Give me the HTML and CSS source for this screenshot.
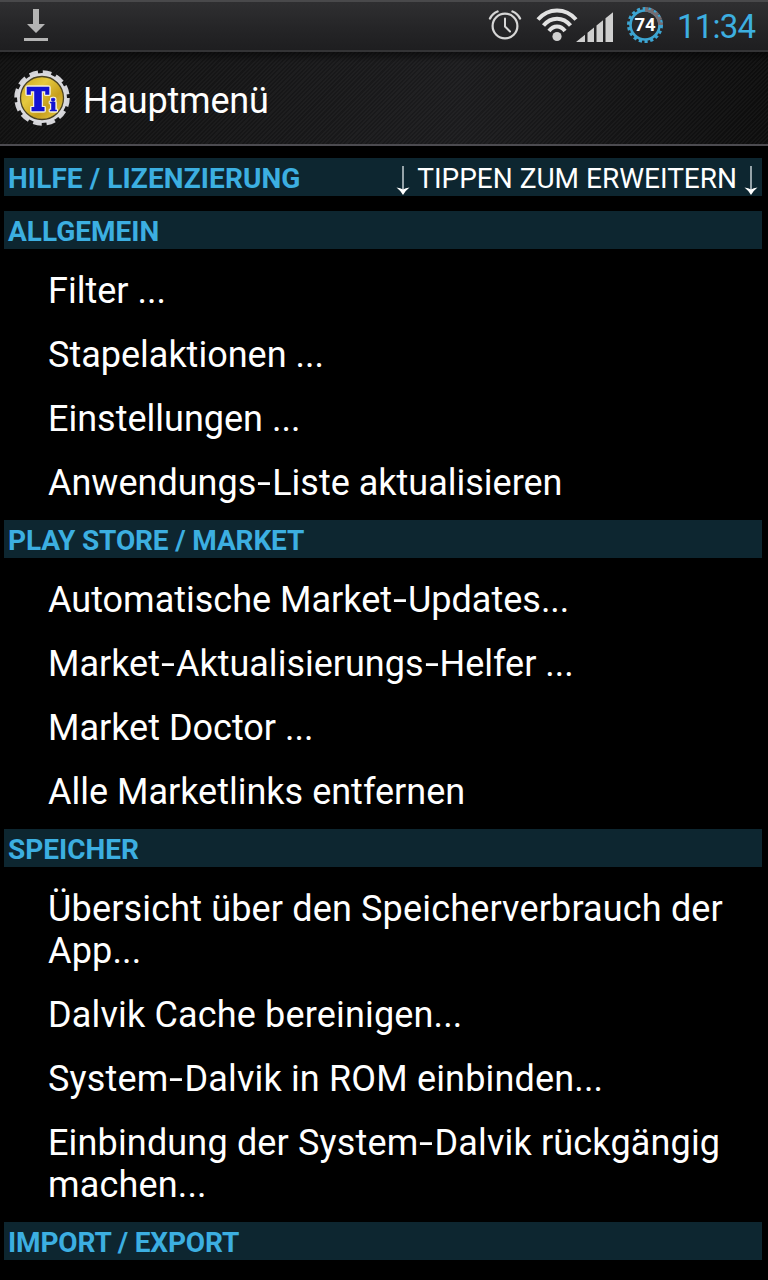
FILE: index.html
```html
<!DOCTYPE html>
<html lang="de">
<head>
    <meta charset="UTF-8">
    <meta name="viewport" content="width=device-width, initial-scale=1.0">
    <title>Hauptmenü</title>
    <link rel="stylesheet" href="styles.css">
</head>
<body>
    <div class="status-bar">
        <svg class="icon-download" width="24" height="34" viewBox="0 0 24 34">
            <path d="M9 1h6v15h6l-9 9-9-9h6z" fill="#b4b4b4"/>
            <path d="M0 30h24v3H0z" fill="#b4b4b4"/>
        </svg>
        <svg class="icon-alarm" width="34" height="34" viewBox="0 0 34 34" fill="none" stroke="#d6d6d6" stroke-linecap="round">
            <circle cx="17" cy="19" r="12.400" stroke-width="2.200"/>
            <path d="M17 11.500v8l5 5" stroke-width="2"/>
            <path d="M2 11.500Q4.500 6.500 9.500 4.500M24.500 4.500Q29.500 6.500 32 11.500" stroke-width="2.400"/>
        </svg>
        <svg class="icon-wifi" width="42" height="36" viewBox="0 0 42 36" fill="none" stroke="#e2e2e2" stroke-width="4">
            <path d="M2 12.500C12.500 .5 29.500 .5 40 12.500"/>
            <path d="M7.500 18.500C15 9.500 27 9.500 34.500 18.500"/>
            <path d="M13 24C17.500 18 24.500 18 29 24"/>
            <circle cx="21" cy="29.500" r="4.600" fill="#d0d0d0" stroke="none"/>
        </svg>
        <svg class="icon-signal" width="38" height="32" viewBox="0 0 38 32" fill="#cfcfcf">
            <path d="M0 30L9 22.700V30zM11.500 20.700L18 15.400V30h-6.500zM20.500 13.400L27 8.200V30h-6.500zM29.500 6.200L37 .2V30h-7.500z"/>
        </svg>
        <svg class="icon-battery" width="38" height="38" viewBox="0 0 38 38" fill="none">
            <circle cx="19" cy="19" r="16.500" stroke="#3da5d2" stroke-width="3" stroke-dasharray="3.200 2.560"/>
            <circle cx="19" cy="19" r="14.500" stroke="#3da5d2" stroke-width="2.600"/>
            <path d="M19 4.500A14.500 14.500 0 0 1 33.500 19" stroke="#756e73" stroke-width="2.600"/>
            <path d="M19 2.500A16.500 16.500 0 0 1 35.500 19" stroke="#756e73" stroke-width="3" stroke-dasharray="3.200 2.560"/>
            <text class="battery-level" x="19" y="25" text-anchor="middle">74</text>
        </svg>
        <span class="clock">11:34</span>
    </div>

    <div class="action-bar">
        <svg class="app-icon" width="56" height="56" viewBox="0 0 56 56">
            <circle cx="28" cy="28" r="25.500" fill="none" stroke="#d4d4d8" stroke-width="4.500" stroke-dasharray="8.500 4.852"/>
            <circle cx="28" cy="28" r="25" fill="#dadade"/>
            <circle cx="28" cy="28" r="21.500" fill="url(#gold)" stroke="#4b4322" stroke-width="1.300"/>
            <g class="logo-text">
                <text x="13.500" y="40" font-size="30" textLength="21" lengthAdjust="spacingAndGlyphs">T</text>
                <text class="logo-small" x="35.500" y="40.500" font-size="17" textLength="7.500" lengthAdjust="spacingAndGlyphs">i</text>
            </g>
            <defs>
                <linearGradient id="gold" x1="0" y1="0" x2="1" y2="1">
                    <stop offset="0" stop-color="#c9a31c"/>
                    <stop offset=".35" stop-color="#e5c93f"/>
                    <stop offset=".65" stop-color="#c69e1c"/>
                    <stop offset="1" stop-color="#e8cf4b"/>
                </linearGradient>
            </defs>
        </svg>
        <h1 class="title">Hauptmenü</h1>
    </div>

    <div class="menu">
        <div class="section-header section-help">
            <span class="help">HILFE / LIZENZIERUNG</span>
            <span class="expand">
                <svg class="arrow" width="14" height="30" viewBox="0 0 14 30"><path d="M7 0v25" stroke="#b9c4c9" stroke-width="1.600"/><path d="M.5 21.500q4 .5 6.500 2 2.500-1.500 6.500-2-4 3-6.500 7.500-2.500-4.500-6.500-7.500z" fill="#fff"/></svg>
                <span class="expand-text">TIPPEN ZUM ERWEITERN</span>
                <svg class="arrow" width="14" height="30" viewBox="0 0 14 30"><path d="M7 0v25" stroke="#b9c4c9" stroke-width="1.600"/><path d="M.5 21.500q4 .5 6.500 2 2.500-1.500 6.500-2-4 3-6.500 7.500-2.500-4.500-6.500-7.500z" fill="#fff"/></svg>
            </span>
        </div>

        <div class="section-header"><span>ALLGEMEIN</span></div>
        <ul class="items">
            <li><span>Filter ...</span></li>
            <li><span>Stapelaktionen ...</span></li>
            <li><span>Einstellungen ...</span></li>
            <li><span>Anwendungs<span class="hyphen">-</span>Liste aktualisieren</span></li>
        </ul>

        <div class="section-header tight"><span>PLAY STORE / MARKET</span></div>
        <ul class="items">
            <li><span>Automatische Market<span class="hyphen">-</span>Updates...</span></li>
            <li><span>Market<span class="hyphen">-</span>Aktualisierungs<span class="hyphen">-</span>Helfer ...</span></li>
            <li><span>Market Doctor ...</span></li>
            <li><span>Alle Marketlinks entfernen</span></li>
        </ul>

        <div class="section-header"><span>SPEICHER</span></div>
        <ul class="items storage">
            <li><span>Übersicht über den Speicherverbrauch der<br>App...</span></li>
            <li><span>Dalvik Cache bereinigen...</span></li>
            <li><span>System<span class="hyphen">-</span>Dalvik in ROM einbinden...</span></li>
            <li><span>Einbindung der System<span class="hyphen">-</span>Dalvik rückgängig<br>machen...</span></li>
        </ul>

        <div class="section-header tight"><span>IMPORT / EXPORT</span></div>
    </div>
</body>
</html>
```
FILE: styles.css
```css
* {
    box-sizing: border-box;
}
body {
    margin: 0;
    height: 1280px;
    overflow: hidden;
    background: #000;
    color: #fff;
    font-family: Roboto, "Noto Sans", sans-serif;
}
.status-bar {
    display: flex;
    align-items: flex-start;
    height: 52px;
    padding: 0 12px 0 24px;
    background: linear-gradient(#2f2f31, #242426 60%, #1e1e20);
    border-top: 2px solid #49494b;
    border-bottom: 2px solid #343436;
}
.icon-download {
    margin-top: 6px;
}
.icon-alarm {
    margin: 5px 0 0 auto;
}
.icon-wifi {
    margin: 5px 0 0 14px;
}
.icon-signal {
    margin: 10px 0 0 -2px;
}
.icon-battery {
    margin: 4px 0 0 12px;
}
.battery-level {
    fill: #fff;
    font-size: 18.500px;
    font-weight: 700;
}
.clock {
    width: 79px;
    margin-left: 13px;
    color: #3dafe0;
    font-size: 33px;
    letter-spacing: -0.8px;
    line-height: 49px;
    white-space: nowrap;
}
.action-bar {
    display: flex;
    align-items: center;
    height: 94px;
    padding: 0 14px;
    background:
        linear-gradient(rgba(0,0,0,0.5), transparent 10px),
        repeating-linear-gradient(135deg, rgba(255,255,255,0.03) 0, rgba(255,255,255,0.03) 1.500px, transparent 1.500px, transparent 3px),
        linear-gradient(90deg, #101010, #1b1b1d 60%, #0d0d0d);
    border-bottom: 2px solid #4c4b50;
}
.logo-text {
    font-family: "DejaVu Serif", serif;
    font-weight: 700;
    fill: #1212d2;
    stroke: #1212d2;
    stroke-width: 2.400px;
    filter: drop-shadow(1px 0 0 #f4f0dc) drop-shadow(-1px 0 0 #f4f0dc) drop-shadow(0 1px 0 #f4f0dc) drop-shadow(0 -1px 0 #f4f0dc);
}
.logo-small {
    stroke-width: 0.6px;
}
.title {
    margin: 5px 0 0 13px;
    font-size: 36px;
    font-weight: 400;
    letter-spacing: -0.2px;
    line-height: 42px;
}
.menu {
    padding: 12px 6px 0 4px;
}
.section-header {
    display: flex;
    align-items: center;
    height: 38px;
    padding: 4px 4px 0;
    background: #0d2630;
    color: #3cafe1;
    font-size: 28px;
    font-weight: 700;
    line-height: 34px;
    white-space: nowrap;
}
.section-help {
    justify-content: space-between;
    padding-right: 4px;
    margin-bottom: 15px;
}
.tight {
    letter-spacing: -0.15px;
}
.help {
    letter-spacing: 0.1px;
}
.expand {
    display: flex;
    align-items: center;
    color: #fff;
    font-weight: 400;
}
.expand-text {
    margin: 0 7px 0 7px;
}
.arrow {
    margin-top: 3px;
}
.items {
    list-style: none;
    margin: 0;
    padding: 10px 0 5px 44px;
    font-size: 36px;
    line-height: 42px;
    white-space: nowrap;
}
.items li {
    padding: 11px 0;
}
.storage {
    letter-spacing: 0.16px;
}
.hyphen {
    display: inline-block;
    transform: scaleX(1.400);
    margin: 0 3px;
}
```
